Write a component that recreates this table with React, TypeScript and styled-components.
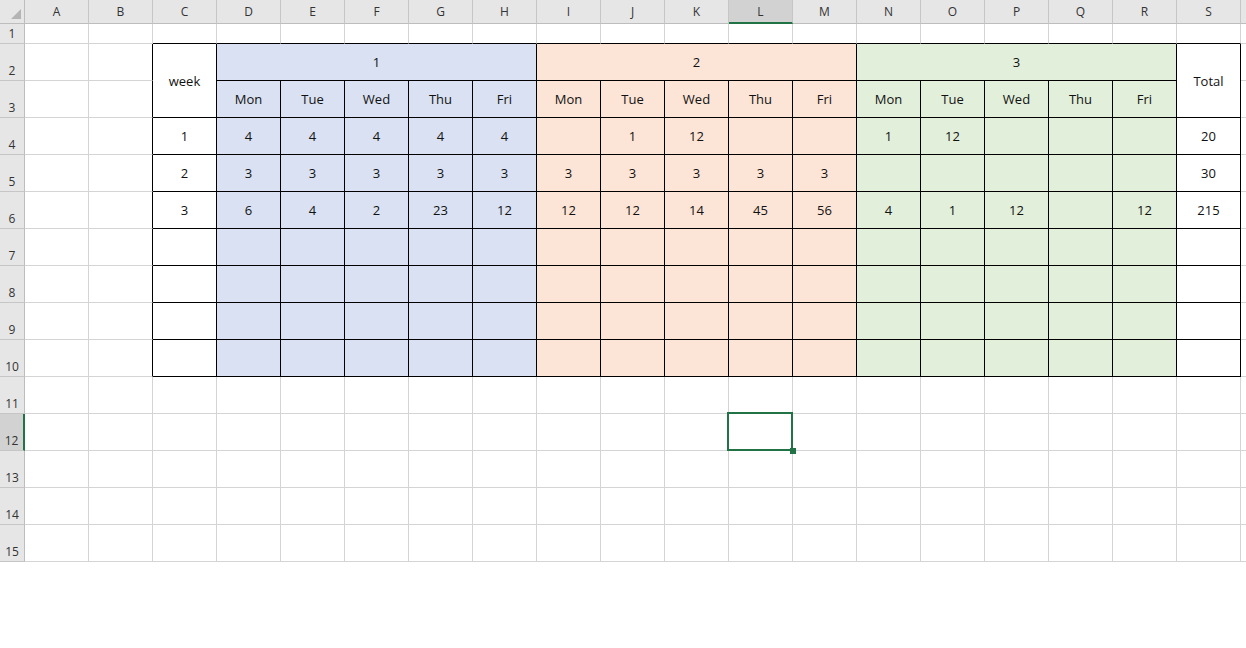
import React from 'react';
import styled, { createGlobalStyle } from 'styled-components';

const GlobalStyle = createGlobalStyle`
  html, body {
    margin: 0;
    padding: 0;
    background: #ffffff;
    overflow: hidden;
  }
  body {
    font-family: "Open Sans", "Liberation Sans", sans-serif;
  }
`;

// 列・行の定義（最後の列は画面端で切れるので見出しは空）
const COLS = [...'ABCDEFGHIJKLMNOPQRS'.split(''), ''];
const ROW_COUNT = 15;
const SELECTED = { col: 11, row: 12 }; // L12

const FILLS = {
    blue: '#D9E1F2',
    orange: '#FCE4D6',
    green: '#E2EFDA',
};

const GRID_LINE = '#d4d4d4';
const TABLE_LINE = '#000000';

type CellData = {
    text?: string;
    cs?: number;
    rs?: number;
};

const DAYS = ['Mon', 'Tue', 'Wed', 'Thu', 'Fri'];

function rowOf(values: string[]) {
    return Object.fromEntries(values.map((v, i) => [i + 2, { text: v }]));
}

// 表の中身（行番号 -> 列番号 -> セル）
const tableData: { [row: number]: { [col: number]: CellData } } = {
    2: {
        2: { text: 'week', rs: 2 },
        3: { text: '1', cs: 5 },
        8: { text: '2', cs: 5 },
        13: { text: '3', cs: 5 },
        18: { text: 'Total', rs: 2 },
    },
    3: Object.fromEntries([...DAYS, ...DAYS, ...DAYS].map((d, i) => [i + 3, { text: d }])),
    4: rowOf(['1', '4', '4', '4', '4', '4', '', '1', '12', '', '', '1', '12', '', '', '', '20']),
    5: rowOf(['2', '3', '3', '3', '3', '3', '3', '3', '3', '3', '3', '', '', '', '', '', '30']),
    6: rowOf(['3', '6', '4', '2', '23', '12', '12', '12', '14', '45', '56', '4', '1', '12', '', '12', '215']),
};

// 結合セルに隠れるセル
const covered = new Set<string>();
Object.entries(tableData).forEach(([r, cols]) => {
    Object.entries(cols).forEach(([c, cell]) => {
        const cs = cell.cs ?? 1;
        const rs = cell.rs ?? 1;
        for (let dr = 0; dr < rs; dr++) {
            for (let dc = 0; dc < cs; dc++) {
                if (dr === 0 && dc === 0) continue;
                covered.add(`${Number(r) + dr}-${Number(c) + dc}`);
            }
        }
    });
});

const inTable = (row: number, col: number) => row >= 2 && row <= 10 && col >= 2 && col <= 18;

const fillOf = (row: number, col: number) => {
    if (row < 2 || row > 10) return undefined;
    if (col >= 3 && col <= 7) return FILLS.blue;
    if (col >= 8 && col <= 12) return FILLS.orange;
    if (col >= 13 && col <= 17) return FILLS.green;
    return undefined;
};

const Sheet = styled.div`
    display: grid;
    grid-template-columns: 25px repeat(20, 64px);
    grid-template-rows: 24px 20px repeat(14, 37px);
    width: max-content;
`;

const Corner = styled.div`
    grid-column: 1;
    grid-row: 1;
    box-sizing: border-box;
    background: #e6e6e6;
    border-right: 1px solid #bdbdbd;
    border-bottom: 1px solid #bdbdbd;
    display: flex;
    align-items: flex-end;
    justify-content: flex-end;
    padding: 0 3px 4px 0;
`;

const ColHead = styled.div<{ $active?: boolean }>`
    box-sizing: border-box;
    display: flex;
    align-items: center;
    justify-content: center;
    background: ${({ $active }) => ($active ? '#d2d2d2' : '#e6e6e6')};
    border-right: 1px solid #c6c6c6;
    border-bottom: ${({ $active }) => ($active ? '2px solid #217346' : '1px solid #bdbdbd')};
    font-size: 12px;
    color: #333333;
    padding-top: ${({ $active }) => ($active ? '1px' : '0')};
`;

const RowHead = styled.div<{ $active?: boolean; $row: number }>`
    grid-column: 1;
    grid-row: ${({ $row }) => $row + 1};
    box-sizing: border-box;
    display: flex;
    align-items: flex-end;
    justify-content: center;
    background: ${({ $active }) => ($active ? '#d2d2d2' : '#e6e6e6')};
    border-right: ${({ $active }) => ($active ? '2px solid #217346' : '1px solid #bdbdbd')};
    border-bottom: 1px solid #c6c6c6;
    font-size: 12px;
    line-height: 16px;
    color: #333333;
    padding-bottom: 1px;
`;

const Cell = styled.div<{
    $row: number;
    $col: number;
    $cs: number;
    $rs: number;
    $fill?: string;
    $right: string;
    $bottom: string;
    $selected?: boolean;
}>`
    grid-column: ${({ $col }) => $col + 2} / span ${({ $cs }) => $cs};
    grid-row: ${({ $row }) => $row + 1} / span ${({ $rs }) => $rs};
    box-sizing: border-box;
    position: relative;
    display: flex;
    align-items: center;
    justify-content: center;
    background: ${({ $fill }) => $fill || '#ffffff'};
    border-right: 1px solid ${({ $right }) => $right};
    border-bottom: 1px solid ${({ $bottom }) => $bottom};
    font-size: 13px;
    color: #111111;
    white-space: nowrap;

    ${({ $selected }) =>
        $selected &&
        `
        &::after {
            content: '';
            position: absolute;
            top: -2px;
            left: -2px;
            right: -1px;
            bottom: -1px;
            border: 2px solid #217346;
            pointer-events: none;
        }
        &::before {
            content: '';
            position: absolute;
            right: -4px;
            bottom: -4px;
            width: 6px;
            height: 6px;
            background: #217346;
            z-index: 1;
        }
    `}
`;

const SelectAllMark: React.FC = () => (
    <svg width="10" height="10" viewBox="0 0 10 10">
        <polygon points="10,0 10,10 0,10" fill="#b4b4b4" />
    </svg>
);

const App: React.FC = () => {
    const cells: React.ReactNode[] = [];

    for (let row = 1; row <= ROW_COUNT; row++) {
        cells.push(
            <RowHead key={`rh-${row}`} $row={row} $active={row === SELECTED.row}>
                {row}
            </RowHead>
        );
        COLS.forEach((_, col) => {
            if (covered.has(`${row}-${col}`)) return;
            const data = tableData[row]?.[col] ?? {};
            const cs = data.cs ?? 1;
            const rs = data.rs ?? 1;
            const lastCol = col + cs - 1;
            const lastRow = row + rs - 1;
            const right = inTable(row, lastCol) || inTable(row, lastCol + 1) ? TABLE_LINE : GRID_LINE;
            const bottom = inTable(lastRow, col) || inTable(lastRow + 1, col) ? TABLE_LINE : GRID_LINE;
            cells.push(
                <Cell
                    key={`c-${row}-${col}`}
                    $row={row}
                    $col={col}
                    $cs={cs}
                    $rs={rs}
                    $fill={fillOf(row, col)}
                    $right={right}
                    $bottom={bottom}
                    $selected={row === SELECTED.row && col === SELECTED.col}
                >
                    {data.text}
                </Cell>
            );
        });
    }

    return (
        <>
            <GlobalStyle />
            <Sheet>
                <Corner>
                    <SelectAllMark />
                </Corner>
                {COLS.map((c, i) => (
                    <ColHead key={`h-${i}`} $active={i === SELECTED.col}>
                        {c}
                    </ColHead>
                ))}
                {cells}
            </Sheet>
        </>
    );
};

export default App;
